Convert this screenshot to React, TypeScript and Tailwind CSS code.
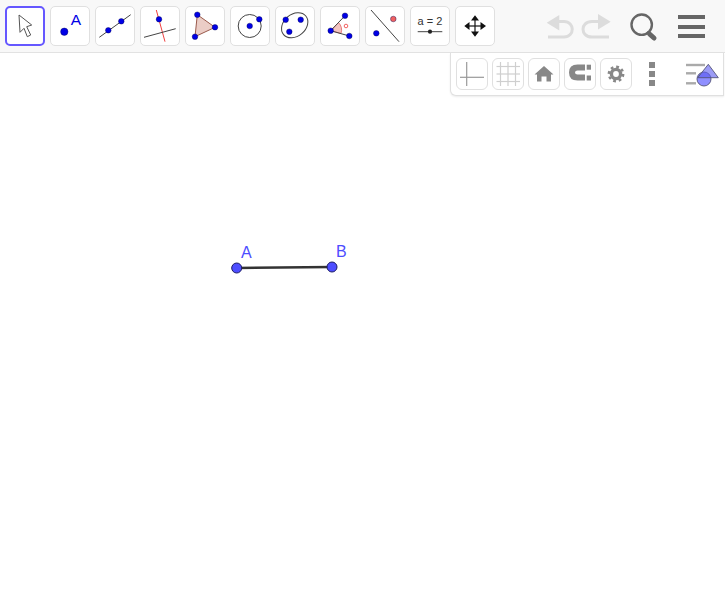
import React from 'react';

const BLUE = '#0000e6';
const INK = '#444444';

const Dot = ({ x, y, r = 2.8, fill = BLUE }: { x: number; y: number; r?: number; fill?: string }) => (
  <circle cx={x} cy={y} r={r} fill={fill} stroke="#00004d" strokeWidth={0.4} />
);

const ToolButton = ({ active, children }: { active?: boolean; children: React.ReactNode }) => (
  <div
    className={`w-10 h-10 shrink-0 bg-white rounded-[5px] ${
      active ? 'border-2 border-[#6557ff]' : 'border border-[#e0e0e0]'
    }`}
  >
    <svg viewBox={active ? '2 2 36 36' : '1 1 38 38'} className={active ? 'w-9 h-9' : 'w-[38px] h-[38px]'}>
      {children}
    </svg>
  </div>
);

const StyleButton = ({ children }: { children: React.ReactNode }) => (
  <div className="w-8 h-8 shrink-0 bg-white rounded-[6px] border border-[#e0e0e0]">
    <svg viewBox="1 1 30 30" className="w-[30px] h-[30px]">
      {children}
    </svg>
  </div>
);

const tools = [
  <path
    key="move"
    d="M14 9 L26.7 19 L21.7 20.7 L25.7 29 L22.3 30.7 L19 22.3 L15 26.3 Z"
    fill="#ffffff"
    stroke="#555555"
    strokeWidth={1}
    strokeLinejoin="round"
  />,
  <g key="point">
    <Dot x={14.3} y={25.7} r={3.7} />
    <text x={25.8} y={19} textAnchor="middle" fontSize={15.5} fill={BLUE} fontFamily="Liberation Sans, sans-serif">
      A
    </text>
  </g>,
  <g key="line">
    <line x1={4.3} y1={31.3} x2={35.7} y2={8.7} stroke={INK} strokeWidth={1} />
    <Dot x={13.3} y={24.3} />
    <Dot x={26.3} y={15.3} />
  </g>,
  <g key="perp">
    <line x1={16.3} y1={4} x2={25} y2={35.7} stroke="#f04040" strokeWidth={1} />
    <line x1={4} y1={31.3} x2={35.7} y2={22.7} stroke={INK} strokeWidth={1} />
    <Dot x={19} y={13.3} />
  </g>,
  <g key="triangle">
    <polygon points="12.3,8.7 30,21.3 10,30.7" fill="#ebcdc6" stroke="#9a5a4c" strokeWidth={1} />
    <Dot x={12.3} y={8.7} />
    <Dot x={30} y={21.3} />
    <Dot x={10} y={30.7} />
  </g>,
  <g key="circle">
    <circle cx={19.7} cy={20} r={11.5} fill="none" stroke={INK} strokeWidth={1} />
    <Dot x={19.7} y={20} />
    <Dot x={29.3} y={13.3} />
  </g>,
  <g key="conic">
    <ellipse cx={19.7} cy={19.3} rx={14.5} ry={11} transform="rotate(-40 19.7 19.3)" fill="none" stroke={INK} strokeWidth={1} />
    <Dot x={10.7} y={13.7} />
    <Dot x={25.7} y={13.7} />
    <Dot x={14.3} y={25.7} />
  </g>,
  <g key="angle">
    <path d="M10.7 24.7 L18.5 16.5 A11 11 0 0 1 21 27.5 Z" fill="#f3c4c0" stroke="#e05050" strokeWidth={0.7} />
    <line x1={10.7} y1={24.7} x2={25} y2={9.7} stroke={INK} strokeWidth={1} />
    <line x1={10.7} y1={24.7} x2={29.3} y2={30} stroke={INK} strokeWidth={1} />
    <circle cx={26} cy={20} r={1.8} fill="none" stroke="#f05050" strokeWidth={0.9} />
    <Dot x={10.7} y={24.7} />
    <Dot x={25} y={9.7} />
    <Dot x={29.3} y={30} />
  </g>,
  <g key="reflect">
    <line x1={6} y1={4} x2={34} y2={35.7} stroke={INK} strokeWidth={1} />
    <Dot x={11.3} y={27.3} />
    <Dot x={28.3} y={13} fill="#f06060" />
  </g>,
  <g key="slider">
    <text x={20} y={19} textAnchor="middle" fontSize={11} fill="#333333" fontFamily="Liberation Sans, sans-serif">
      a = 2
    </text>
    <line x1={7.7} y1={25.7} x2={32.3} y2={25.7} stroke={INK} strokeWidth={1} />
    <circle cx={20} cy={25.7} r={2.1} fill="#222222" />
  </g>,
  <g key="pan">
    <line x1={11} y1={20} x2={29} y2={20} stroke="#111111" strokeWidth={1.2} />
    <line x1={20} y1={11} x2={20} y2={29} stroke="#111111" strokeWidth={1.2} />
    <path
      d="M20 9.3 L24 14.5 L16 14.5 Z M20 30.7 L24 25.5 L16 25.5 Z M9.3 20 L14.5 16 L14.5 24 Z M31 20 L25.5 16 L25.5 24 Z"
      fill="#111111"
    />
  </g>,
];

export default function App() {
  return (
    <div className="w-[725px] h-[600px] bg-white flex flex-col overflow-hidden">
      <div className="h-[53px] shrink-0 bg-[#f8f8f8] border-b border-[#e2e2e2] flex items-start pt-1.5 pl-[5px] gap-[5px]">
        {tools.map((t, i) => (
          <ToolButton key={i} active={i === 0}>
            {t}
          </ToolButton>
        ))}
        <div className="ml-[45px] flex items-start">
          <svg viewBox="0 0 70 40" className="w-[70px] h-10 mt-[-6px]">
            <g fill="none" stroke="#dcdcdc" strokeWidth={3}>
              <path d="M14 21.5 H19 C30 21.5 30 37 19 37 H3" />
              <path d="M53 21.5 H47 C35 21.5 35 37 47 37 H64" />
            </g>
            <path d="M1.7 22.7 L14.3 15 V30.5 Z M65.7 21.7 L53 14 V29.5 Z" fill="#dcdcdc" />
          </svg>
          <svg viewBox="0 0 30 30" className="w-[30px] h-[30px] mt-[6px] ml-[15px]">
            <circle cx={11.7} cy={12.7} r={10.2} fill="none" stroke="#666666" strokeWidth={2.4} />
            <line x1={17} y1={20} x2={18.5} y2={21} stroke="#666666" strokeWidth={2.4} />
            <line x1={19.5} y1={22} x2={24} y2={26} stroke="#666666" strokeWidth={5} strokeLinecap="round" />
          </svg>
          <div className="flex flex-col gap-[5.5px] w-[27px] mt-[9px] ml-[18px]">
            <div className="h-1 bg-[#666666]" />
            <div className="h-1 bg-[#666666]" />
            <div className="h-1 bg-[#666666]" />
          </div>
        </div>
      </div>

      <div className="relative flex-1">
        <svg viewBox="0 0 725 547" className="w-[725px] h-[547px]">
          <line x1={236.7} y1={215} x2={332} y2={214} stroke="#333333" strokeWidth={2.4} />
          <circle cx={236.7} cy={215} r={5} fill="#4d4dff" stroke="#1c1c66" strokeWidth={1} />
          <circle cx={332} cy={214} r={5} fill="#4d4dff" stroke="#1c1c66" strokeWidth={1} />
          <text x={241} y={205} fontSize={16} fill="#4d4dff" fontFamily="Liberation Sans, sans-serif">
            A
          </text>
          <text x={336} y={204} fontSize={16} fill="#4d4dff" fontFamily="Liberation Sans, sans-serif">
            B
          </text>
        </svg>

        <div className="absolute right-px top-0 w-[274px] h-[43px] bg-white border-l border-b border-r border-[#e0e0e0] rounded-bl-[6px] shadow-[0_1px_2px_rgba(0,0,0,0.08)] flex items-start pt-[5px] pl-[5px] gap-1">
          <StyleButton>
            <line x1={4} y1={19.3} x2={28} y2={19.3} stroke="#999999" strokeWidth={1.2} />
            <line x1={10.7} y1={4} x2={10.7} y2={28} stroke="#999999" strokeWidth={1.2} />
          </StyleButton>
          <StyleButton>
            <g stroke="#cfcfcf" strokeWidth={1.2}>
              <line x1={4.5} y1={8.5} x2={28} y2={8.5} />
              <line x1={4.5} y1={16} x2={28} y2={16} />
              <line x1={4.5} y1={23.5} x2={28} y2={23.5} />
              <line x1={8.5} y1={4} x2={8.5} y2={28} />
              <line x1={16} y1={4} x2={16} y2={28} />
              <line x1={23.5} y1={4} x2={23.5} y2={28} />
            </g>
          </StyleButton>
          <StyleButton>
            <path d="M16 8 L25.5 16.5 H23 V23.5 H18.5 V18.5 H13.5 V23.5 H9 V16.5 H6.5 Z" fill="#888888" />
          </StyleButton>
          <StyleButton>
            <path d="M21 9.5 H13.5 C9 9.5 8 12 8 14.5 C8 17 9 19.5 13.5 19.5 H21" fill="none" stroke="#888888" strokeWidth={6} />
            <rect x={22.7} y={6.7} width={4.3} height={5} fill="#888888" />
            <rect x={22.7} y={17.5} width={4.3} height={5} fill="#888888" />
          </StyleButton>
          <StyleButton>
            <circle cx={16} cy={16} r={4.6} fill="none" stroke="#888888" strokeWidth={3.4} />
            <circle cx={16} cy={16} r={7.2} fill="none" stroke="#888888" strokeWidth={2.4} strokeDasharray="2.8 2.85" />
          </StyleButton>
          <div className="flex flex-col gap-[3px] w-1.5 mt-1 ml-[13px]">
            <div className="h-[6px] bg-[#888888]" />
            <div className="h-[6px] bg-[#888888]" />
            <div className="h-[6px] bg-[#888888]" />
          </div>
          <svg viewBox="0 0 34 30" className="w-[34px] h-[30px] mt-[3px] ml-[27px]">
            <g stroke="#aaaaaa" strokeWidth={2.4}>
              <line x1={0} y1={4} x2={19} y2={4} />
              <line x1={0} y1={12.3} x2={10} y2={12.3} />
              <line x1={0} y1={22.3} x2={10} y2={22.3} />
            </g>
            <circle cx={18} cy={18} r={7} fill="#8f8fff" stroke="#555577" strokeWidth={0.9} />
            <polygon points="22.3,3.3 11.7,16.7 32.3,16.7" fill="#5a5af0" fillOpacity={0.6} stroke="#555577" strokeWidth={0.9} />
          </svg>
        </div>
      </div>
    </div>
  );
}
